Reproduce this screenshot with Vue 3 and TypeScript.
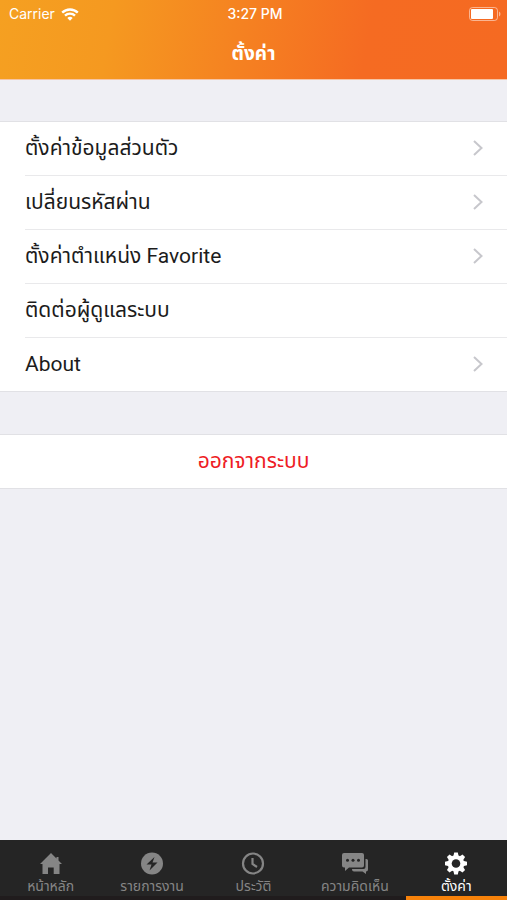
<script setup lang="ts">
interface Row {
  label: string
  chevron: boolean
}
interface Tab {
  id: string
  label: string
}

const rows: Row[] = [
  { label: 'ตั้งค่าข้อมูลส่วนตัว', chevron: true },
  { label: 'เปลี่ยนรหัสผ่าน', chevron: true },
  { label: 'ตั้งค่าตำแหน่ง Favorite', chevron: true },
  { label: 'ติดต่อผู้ดูแลระบบ', chevron: false },
  { label: 'About', chevron: true },
]

const tabs: Tab[] = [
  { id: 'home', label: 'หน้าหลัก' },
  { id: 'jobs', label: 'รายการงาน' },
  { id: 'history', label: 'ประวัติ' },
  { id: 'feedback', label: 'ความคิดเห็น' },
  { id: 'settings', label: 'ตั้งค่า' },
]
const active = 'settings'
const teeth = [0, 45, 90, 135, 180, 225, 270, 315]
</script>

<template>
  <div class="screen">
    <header class="header">
      <div class="status">
        <div class="carrier">
          <span>Carrier</span>
          <svg class="wifi" viewBox="0 0 18 13" aria-hidden="true">
            <path d="M1.2 4.7a11.2 11.2 0 0 1 15.6 0" />
            <path d="M4 7.6a7.2 7.2 0 0 1 10 0" />
            <path class="solid" d="M6.3 10a3.9 3.9 0 0 1 5.4 0L9 12.7z" />
          </svg>
        </div>
        <span class="time">3:27 PM</span>
        <svg class="battery" viewBox="0 0 32 14" aria-hidden="true">
          <rect class="shell" x="0.5" y="0.5" width="28" height="13" rx="3" />
          <rect class="charge" x="2" y="2" width="22" height="10" rx="1" />
          <path class="cap" d="M30 4.5c2 1 2 4 0 5z" />
        </svg>
      </div>
      <h1 class="title">ตั้งค่า</h1>
    </header>

    <main class="content">
      <ul class="group">
        <li v-for="row in rows" :key="row.label" class="item">
          <button type="button" class="row">
            <span>{{ row.label }}</span>
            <svg v-if="row.chevron" class="chevron" viewBox="0 0 10 16" aria-hidden="true">
              <path d="M1 1l7.5 7L1 15" />
            </svg>
          </button>
        </li>
      </ul>
      <div class="group">
        <button type="button" class="logout">ออกจากระบบ</button>
      </div>
    </main>

    <nav class="tabs">
      <a
        v-for="tab in tabs"
        :key="tab.id"
        :href="'#' + tab.id"
        class="tab"
        :class="{ active: tab.id === active }"
        :aria-current="tab.id === active ? 'page' : undefined"
      >
        <svg v-if="tab.id === 'home'" class="icon" viewBox="0 0 28 24" aria-hidden="true">
          <path d="M14 1L3 12h2.5v10H11v-6.5h5.7V22h5.8V12H25l-3.5-3.5V5h-2v1.5z" />
        </svg>
        <svg v-else-if="tab.id === 'jobs'" class="icon" viewBox="0 0 28 24" aria-hidden="true">
          <circle cx="14" cy="11.5" r="11" />
          <path class="cut" d="M16.5 5L8.5 12.5h5L11.5 18.5 19.5 10.5h-5z" />
        </svg>
        <svg v-else-if="tab.id === 'history'" class="icon" viewBox="0 0 28 24" aria-hidden="true">
          <circle class="line" cx="14" cy="11.5" r="10" />
          <path class="line" d="M13.5 6v6l4.5 3" />
        </svg>
        <svg v-else-if="tab.id === 'feedback'" class="icon" viewBox="0 0 28 24" aria-hidden="true">
          <path d="M24.5 7h1A1.5 1.5 0 0 1 27 8.5v9a2 2 0 0 1-2 2V22l-3.500-2.500H13a2 2 0 0 1-2-2V17h11.5a2 2 0 0 0 2-2z" />
          <path d="M3 1h18a2 2 0 0 1 2 2v10.5a2 2 0 0 1-2 2H8L4 19v-3.5H3a2 2 0 0 1-2-2V3a2 2 0 0 1 2-2z" />
          <circle class="cut" cx="6.5" cy="8.2" r="1.5" />
          <circle class="cut" cx="12" cy="8.2" r="1.5" />
          <circle class="cut" cx="17.5" cy="8.2" r="1.5" />
        </svg>
        <svg v-else class="icon" viewBox="0 0 28 24" aria-hidden="true">
          <circle cx="14" cy="11.5" r="8.3" />
          <path
            v-for="angle in teeth"
            :key="angle"
            d="M11.3 4.5l.9-4h3.6l.9 4z"
            :transform="`rotate(${angle} 14 11.5)`"
          />
          <circle class="cut" cx="14" cy="11.5" r="4.3" />
        </svg>
        <span class="caption">{{ tab.label }}</span>
      </a>
    </nav>
  </div>
</template>

<style>
body {
  margin: 0;
  background: #efeff4;
}
</style>

<style scoped>
.screen {
  display: flex;
  flex-direction: column;
  min-height: 100vh;
  background: #efeff4;
  color: #1c1c1c;
  font-family: Roboto, "Noto Sans Thai", "Noto Sans", sans-serif;
}

.header {
  box-sizing: border-box;
  height: 80px;
  color: #fff;
  background: linear-gradient(100deg, #f5a021 0%, #f59920 22%, #f56b22 72%, #f56a22 100%);
  border-bottom: 1px solid #f6c5a5;
}

.status {
  display: grid;
  grid-template-columns: 1fr auto 1fr;
  align-items: center;
  height: 28px;
  padding: 0 6px 0 9px;
  font: 14px/28px Inter, "Liberation Sans", sans-serif;
}

.carrier {
  display: flex;
  align-items: center;
  gap: 6px;
}

.wifi {
  width: 18px;
  height: 13px;
  fill: none;
  stroke: #fff;
  stroke-width: 2.4;
}

.wifi .solid {
  fill: #fff;
  stroke: none;
}

.time {
  font-weight: 500;
}

.battery {
  justify-self: end;
  width: 32px;
  height: 14px;
  fill: #fff;
}

.battery .shell {
  fill: none;
  stroke: #fff;
  stroke-opacity: 0.5;
}

.battery .cap {
  fill-opacity: 0.5;
}

.title {
  margin: 0;
  font-size: 19px;
  line-height: 51px;
  font-weight: 700;
  text-align: center;
}

.content {
  display: flex;
  flex: 1;
  flex-direction: column;
  gap: 42px;
  padding: 41px 0;
}

.group {
  margin: 0;
  padding: 0;
  list-style: none;
  background: #fff;
  border-top: 1px solid #e1e1e5;
  border-bottom: 1px solid #e1e1e5;
}

.item {
  padding-left: 25px;
}

.row,
.logout {
  box-sizing: border-box;
  width: 100%;
  height: 53px;
  margin: 0;
  padding: 0 0 2px;
  border: 0;
  background: none;
  color: inherit;
  font: inherit;
  font-size: 21px;
  line-height: 50px;
}

.row {
  display: flex;
  align-items: center;
  justify-content: space-between;
  padding-right: 24px;
  text-align: left;
}

.item + .item .row {
  height: 54px;
  border-top: 1px solid #e9e9eb;
}

.chevron {
  width: 10px;
  height: 16px;
  fill: none;
  stroke: #c7c7cc;
  stroke-width: 2;
}

.logout {
  display: block;
  color: #ee1c25;
  text-align: center;
}

.tabs {
  display: grid;
  grid-template-columns: repeat(5, 1fr);
  height: 60px;
  background: #252525;
}

.tab {
  box-sizing: border-box;
  display: flex;
  flex-direction: column;
  align-items: center;
  padding-top: 12px;
  color: #858585;
  text-decoration: none;
  border-bottom: 4px solid #201c1d;
}

.tab.active {
  color: #fff;
  border-bottom-color: #f7820a;
}

.icon {
  width: 28px;
  height: 24px;
  fill: currentColor;
}

.icon .line {
  fill: none;
  stroke: currentColor;
  stroke-width: 2.2;
}

.icon .cut {
  fill: #252525;
}

.caption {
  font-size: 14px;
  line-height: 20px;
  white-space: nowrap;
}
</style>
